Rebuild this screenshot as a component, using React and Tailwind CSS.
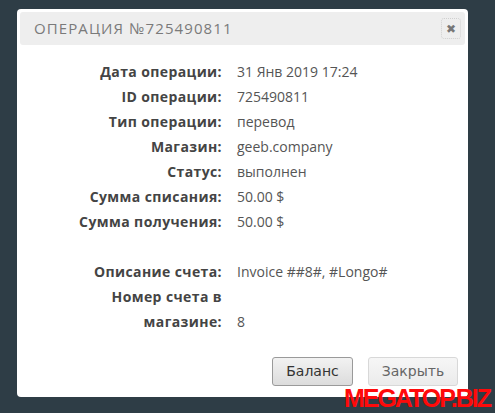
import React from "react";

const rows = [
  ["Дата операции:", "31 Янв 2019 17:24"],
  ["ID операции:", "725490811"],
  ["Тип операции:", "перевод"],
  ["Магазин:", "geeb.company"],
  ["Статус:", "выполнен"],
  ["Сумма списания:", "50.00 $"],
  ["Сумма получения:", "50.00 $"],
];

function Row({ label, value }) {
  return (
    <div className="flex items-end leading-[25px]">
      <div className="w-[202px] shrink-0 text-right font-bold tracking-[0.4px] text-[#444]">{label}</div>
      <div className="pl-[15px] text-[#555]">{value}</div>
    </div>
  );
}

export default function App() {
  return (
    <div
      className="relative w-[495px] h-[413px] overflow-hidden bg-[#2e3d46]"
      style={{ fontFamily: '"Open Sans", "Liberation Sans", sans-serif' }}
    >
      <div className="ml-[17px] pt-[9px]">
        <div className="w-[451px] h-[388px] bg-white rounded-[4px] p-[3px] flex flex-col">
          {/* header */}
          <div className="h-[33px] bg-[#eeeeee] rounded-[3px] flex items-center justify-between pl-[14px] pr-[4px]">
            <span className="text-[15px] tracking-[1.1px] text-[#7a7a7a]">ОПЕРАЦИЯ №725490811</span>
            <button className="w-[20px] h-[21px] border border-dotted border-[#cfcfcf] rounded-[3px] flex items-center justify-center text-[#777] text-[12px] leading-none">
              ✖
            </button>
          </div>

          {/* details */}
          <div className="pt-[14px] text-[14px]">
            {rows.map(([l, v]) => (
              <Row key={l} label={l} value={v} />
            ))}
            <div className="h-[25px]" />
            <Row label="Описание счета:" value="Invoice ##8#, #Longo#" />
            <Row
              label={
                <>
                  Номер счета в
                  <br />
                  магазине:
                </>
              }
              value="8"
            />
          </div>

          {/* buttons */}
          <div
            className="mt-auto mb-[8px] flex justify-end gap-[15px] pr-[7px]"
            style={{ fontFamily: '"DejaVu Sans", Verdana, sans-serif' }}
          >
            <button className="w-[81px] h-[29px] rounded-[3px] border border-[#9a9a9a] bg-gradient-to-b from-[#f2f2f2] to-[#dcdcdc] text-[14px] text-[#333]">
              Баланс
            </button>
            <button className="w-[90px] h-[29px] rounded-[3px] border border-[#d8d8d8] bg-gradient-to-b from-[#f6f6f6] to-[#ebebeb] text-[14px] text-[#666]">
              Закрыть
            </button>
          </div>
        </div>
      </div>

      {/* watermark */}
      <div
        className="absolute right-[5px] bottom-[2px] text-[25px] font-bold text-[#ff0a0a] tracking-[-2px] leading-none"
        style={{ fontFamily: '"Liberation Sans Narrow", "Liberation Sans", sans-serif' }}
      >
        MEGATOP.BIZ
      </div>
    </div>
  );
}
